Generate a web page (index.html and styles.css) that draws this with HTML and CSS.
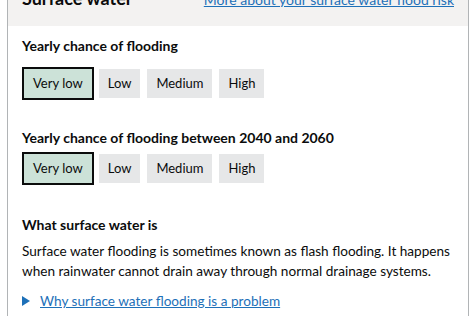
FILE: index.html
```html
<!DOCTYPE html>
<html lang="en">
<head>
  <meta charset="UTF-8">
  <meta name="viewport" content="width=device-width, initial-scale=1.0">
  <title>Surface water</title>
  <link rel="stylesheet" href="styles.css">
</head>
<body>
  <div class="card">
    <div class="card-header">
      <div class="card-header-row">
        <h2 class="card-title">Surface water</h2>
        <a class="link" href="#">More about your surface water flood risk</a>
      </div>
    </div>

    <div class="card-body">
      <h3 class="heading">Yearly chance of flooding</h3>
      <ul class="scale scale-first">
        <li class="scale-item selected">Very low</li>
        <li class="scale-item">Low</li>
        <li class="scale-item">Medium</li>
        <li class="scale-item">High</li>
      </ul>

      <h3 class="heading">Yearly chance of flooding between 2040 and 2060</h3>
      <ul class="scale scale-second">
        <li class="scale-item selected">Very low</li>
        <li class="scale-item">Low</li>
        <li class="scale-item">Medium</li>
        <li class="scale-item">High</li>
      </ul>

      <h3 class="heading">What surface water is</h3>
      <p class="body">Surface water flooding is sometimes known as flash flooding. It happens when rainwater cannot drain away through normal drainage systems.</p>

      <details class="details">
        <summary class="summary"><span class="summary-text">Why surface water flooding is a problem</span></summary>
      </details>
    </div>
  </div>
</body>
</html>
```

FILE: styles.css
```css
body {
  margin: 0;
  background: #fff;
  color: #0b0c0c;
  font-family: Lato, "Liberation Sans", sans-serif;
}

.card {
  margin: 0 7px;
  border-left: 1px solid #b1b4b6;
  border-right: 1px solid #b1b4b6;
  height: 316px;
  overflow: hidden;
}

.card-header {
  height: 26px;
  background: #f3f2f1;
  padding: 0 14px;
  overflow: hidden;
}

.card-header-row {
  margin-top: -12px;
  display: flex;
  justify-content: space-between;
  align-items: baseline;
}

.card-title {
  margin: 0;
  font-size: 18px;
  line-height: 20px;
  font-weight: 700;
}

.link {
  font-size: 14px;
  line-height: 20px;
  color: #1d70b8;
}

.card-body {
  padding: 10px 14px 0;
}

.heading {
  margin: 0;
  font-size: 14px;
  line-height: 20px;
  font-weight: 700;
}

.scale {
  list-style: none;
  padding: 0 2px;
  display: flex;
  gap: 7px;
}

.scale-first {
  margin: 13px 0 30px;
}

.scale-second {
  margin: 6px 0 32px;
}

.scale-item {
  height: 29px;
  line-height: 29px;
  padding: 0 9px;
  background: #e6e7e8;
  font-size: 13px;
}

.selected {
  background: #cce2d8;
  outline: 2px solid #0b0c0c;
}

.body {
  margin: 6px 0 10px;
  font-size: 13.6px;
  line-height: 20px;
}

.summary {
  font-size: 13.6px;
  line-height: 20px;
  color: #1d70b8;
  list-style: none;
  display: flex;
  align-items: center;
  gap: 10px;
}

.summary::-webkit-details-marker {
  display: none;
}

.summary::before {
  content: "";
  border-left: 8px solid #1d70b8;
  border-top: 5px solid transparent;
  border-bottom: 5px solid transparent;
}

.summary-text {
  text-decoration: underline;
}
```
